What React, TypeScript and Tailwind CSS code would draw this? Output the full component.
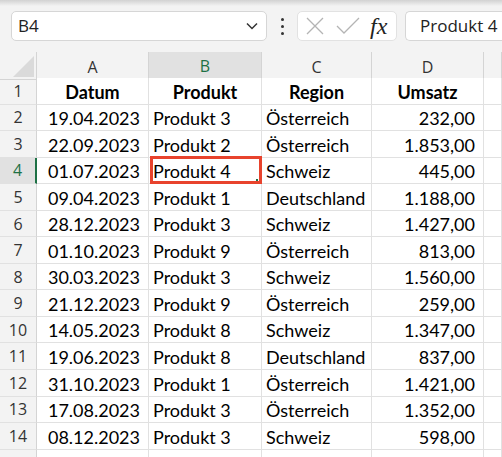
import React from "react";

const UI = { fontFamily: '"Open Sans", "Noto Sans", sans-serif' };
const CELL = { fontFamily: 'Lato, "Noto Sans", sans-serif' };

const ROWS: [string, string, string, string][] = [
  ["19.04.2023", "Produkt 3", "Österreich", "232,00"],
  ["22.09.2023", "Produkt 2", "Österreich", "1.853,00"],
  ["01.07.2023", "Produkt 4", "Schweiz", "445,00"],
  ["09.04.2023", "Produkt 1", "Deutschland", "1.188,00"],
  ["28.12.2023", "Produkt 3", "Schweiz", "1.427,00"],
  ["01.10.2023", "Produkt 9", "Österreich", "813,00"],
  ["30.03.2023", "Produkt 3", "Schweiz", "1.560,00"],
  ["21.12.2023", "Produkt 9", "Österreich", "259,00"],
  ["14.05.2023", "Produkt 8", "Schweiz", "1.347,00"],
  ["19.06.2023", "Produkt 8", "Deutschland", "837,00"],
  ["31.10.2023", "Produkt 1", "Österreich", "1.421,00"],
  ["17.08.2023", "Produkt 3", "Österreich", "1.352,00"],
  ["08.12.2023", "Produkt 3", "Schweiz", "598,00"],
];

const GRID = "grid grid-cols-[37px_112px_113px_110px_112px_1fr]";

function RowHeader({ n, active }: { n?: number; active?: boolean }) {
  return (
    <div
      style={UI}
      className={`flex items-center justify-center border-b border-[#e1e1e1] text-[16px] ${
        active
          ? "border-r-2 border-r-[#1e7145] bg-[#e1e1e1] text-[#1e7145]"
          : "border-r border-r-[#d4d4d4] bg-[#f3f3f3] text-[#333]"
      }`}
    >
      {n}
    </div>
  );
}

function Cell({ children, align = "left", bold, selected }: { children?: React.ReactNode; align?: "left" | "right" | "center"; bold?: boolean; selected?: boolean }) {
  const al = align === "right" ? "justify-end pr-[8px]" : align === "center" ? "justify-center" : "justify-start pl-[4px]";
  return (
    <div
      style={CELL}
      className={`relative flex items-end pb-[1px] overflow-visible whitespace-nowrap border-b border-r border-[#e1e1e1] bg-white text-[18px] leading-[22px] text-black ${al} ${bold ? "font-bold" : ""}`}
    >
      {children}
      {selected && (
        <div className="pointer-events-none absolute -top-[2px] -bottom-[1px] left-[1px] -right-[1px] border-[3px] border-[#e8432d]">
          <div className="absolute bottom-[0px] right-[1px] h-[2px] w-[2px] bg-[#1e7145]" />
        </div>
      )}
    </div>
  );
}

export default function App() {
  return (
    <div className="relative h-[457px] w-[502px] overflow-hidden bg-[#f3f3f3]">
      <div className="absolute left-0 right-0 top-0 h-[6px] bg-gradient-to-b from-[#d2d2d2] to-[#f3f3f3]" />

      {/* formula bar */}
      <div className="flex h-[52px] items-start gap-0 pt-[11px]">
        <div className="ml-[11px] flex h-[30px] w-[256px] items-center justify-between rounded-[5px] border border-[#d6d6d6] bg-white pl-[6px] pr-[8px]">
          <span style={UI} className="text-[17px] text-[#222]">B4</span>
          <svg width="12" height="8" viewBox="0 0 12 8" fill="none" stroke="#333" strokeWidth="1.5">
            <path d="M1 1.5 L6 6.5 L11 1.5" />
          </svg>
        </div>
        <div className="flex h-[30px] w-[30px] flex-col items-center justify-center gap-[4px]">
          <span className="h-[3px] w-[3px] rounded-full bg-[#333]" />
          <span className="h-[3px] w-[3px] rounded-full bg-[#333]" />
          <span className="h-[3px] w-[3px] rounded-full bg-[#333]" />
        </div>
        <div className="flex h-[30px] w-[100px] items-center rounded-[5px] border border-[#e2e2e2] bg-white pl-[8px]">
          <svg width="18" height="18" viewBox="0 0 18 18" fill="none" stroke="#b4b4b4" strokeWidth="1.3">
            <path d="M1 1 L17 17 M17 1 L1 17" />
          </svg>
          <svg className="ml-[12px]" width="24" height="18" viewBox="0 0 24 18" fill="none" stroke="#b4b4b4" strokeWidth="1.3">
            <path d="M1 9 L8 16 L23 1" />
          </svg>
          <span
            style={{ fontFamily: '"Liberation Serif", "DejaVu Serif", serif' }}
            className="ml-[10px] text-[24px] italic leading-none text-[#222]"
          >
            fx
          </span>
        </div>
        <div className="ml-[8px] flex h-[30px] flex-1 items-center rounded-l-[5px] border border-r-0 border-[#d6d6d6] bg-white pl-[14px]">
          <span style={UI} className="whitespace-nowrap text-[17px] text-[#222]">Produkt 4</span>
        </div>
      </div>

      {/* column headers */}
      <div className={`${GRID} h-[26px]`}>
        <div className="relative border-b border-r border-[#d4d4d4] bg-[#f3f3f3]">
          <svg className="absolute bottom-[2px] right-[2px]" width="21" height="21" viewBox="0 0 21 21">
            <path d="M21 0 L21 21 L0 21 Z" fill="#dadada" />
          </svg>
        </div>
        {["A", "B", "C", "D", ""].map((c) => (
          <div
            key={c || "E"}
            style={UI}
            className={`flex items-center justify-center pt-[2px] text-[16px] ${
              c === "B"
                ? "border-b-2 border-r border-b-[#1e7145] border-r-[#d4d4d4] bg-[#e1e1e1] text-[#1e7145]"
                : "border-b border-r border-[#d4d4d4] bg-[#f3f3f3] text-[#333]"
            }`}
          >
            {c}
          </div>
        ))}
      </div>

      {/* rows */}
      <div className={`${GRID} h-[26.55px]`}>
        <RowHeader n={1} />
        <Cell align="center" bold>Datum</Cell>
        <Cell align="center" bold>Produkt</Cell>
        <Cell align="center" bold>Region</Cell>
        <Cell align="center" bold>Umsatz</Cell>
        <Cell />
      </div>
      {ROWS.map((r, i) => (
        <div key={i} className={`${GRID} h-[26.55px]`}>
          <RowHeader n={i + 2} active={i + 2 === 4} />
          <Cell align="right">{r[0]}</Cell>
          <Cell selected={i + 2 === 4}>{r[1]}</Cell>
          <Cell>{r[2]}</Cell>
          <Cell align="right">{r[3]}</Cell>
          <Cell />
        </div>
      ))}
      <div className={`${GRID} h-[26.55px]`}>
        <RowHeader />
        <Cell />
        <Cell />
        <Cell />
        <Cell />
        <Cell />
      </div>
    </div>
  );
}
